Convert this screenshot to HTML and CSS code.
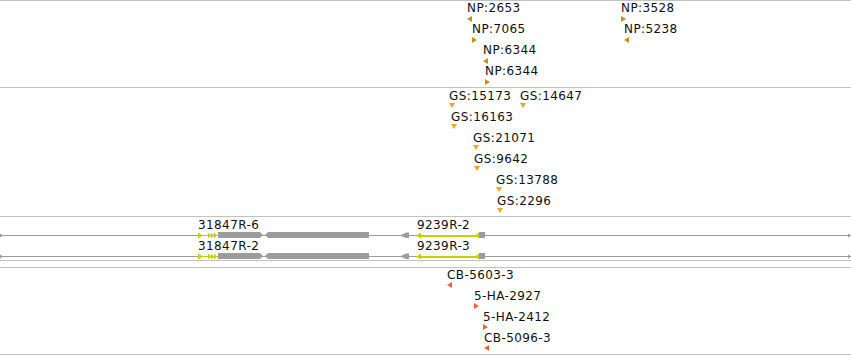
FILE: index.html
```html
<!DOCTYPE html>
<html lang="en">
<head>
  <meta charset="UTF-8" />
  <meta name="viewport" content="width=device-width, initial-scale=1" />
  <title>Track view</title>
  <link rel="stylesheet" href="styles.css">
</head>
<body>

  <div class="tracks">

    <!-- NP features -->
    <div class="track track-np">
      <div class="row">
        <div class="feat np" style="left:467px"><span class="lbl">NP:2653</span><i class="arr left"></i></div>
        <div class="feat np" style="left:621px"><span class="lbl">NP:3528</span><i class="arr right"></i></div>
      </div>
      <div class="row">
        <div class="feat np" style="left:472px"><span class="lbl">NP:7065</span><i class="arr right"></i></div>
        <div class="feat np" style="left:624px"><span class="lbl">NP:5238</span><i class="arr left"></i></div>
      </div>
      <div class="row">
        <div class="feat np" style="left:483px"><span class="lbl">NP:6344</span><i class="arr left"></i></div>
      </div>
      <div class="row">
        <div class="feat np" style="left:485px"><span class="lbl">NP:6344</span><i class="arr right"></i></div>
      </div>
    </div>

    <!-- GS features -->
    <div class="track track-gs">
      <div class="row">
        <div class="feat gs" style="left:449px"><span class="lbl">GS:15173</span><i class="arr down"></i></div>
        <div class="feat gs" style="left:520px"><span class="lbl">GS:14647</span><i class="arr down"></i></div>
      </div>
      <div class="row">
        <div class="feat gs" style="left:451px"><span class="lbl">GS:16163</span><i class="arr down"></i></div>
      </div>
      <div class="row">
        <div class="feat gs" style="left:473px"><span class="lbl">GS:21071</span><i class="arr down"></i></div>
      </div>
      <div class="row">
        <div class="feat gs" style="left:474px"><span class="lbl">GS:9642</span><i class="arr down"></i></div>
      </div>
      <div class="row">
        <div class="feat gs" style="left:496px"><span class="lbl">GS:13788</span><i class="arr down"></i></div>
      </div>
      <div class="row">
        <div class="feat gs" style="left:497px"><span class="lbl">GS:2296</span><i class="arr down"></i></div>
      </div>
    </div>

    <!-- gene models -->
    <div class="track track-genes">
      <div class="row">
        <div class="labels">
          <span class="gene-lbl" style="left:198px">31847R-6</span>
          <span class="gene-lbl" style="left:417px">9239R-2</span>
        </div>
        <svg class="gene" width="851" height="7" viewBox="0 0 851 7">
          <use href="#model" />
        </svg>
      </div>
      <div class="row">
        <div class="labels">
          <span class="gene-lbl" style="left:198px">31847R-2</span>
          <span class="gene-lbl" style="left:417px">9239R-3</span>
        </div>
        <svg class="gene" width="851" height="7" viewBox="0 0 851 7">
          <use href="#model" />
        </svg>
      </div>
    </div>

    <div class="track track-empty"></div>

    <!-- CB / HA features -->
    <div class="track track-cb">
      <div class="row">
        <div class="feat cb" style="left:447px"><span class="lbl">CB-5603-3</span><i class="arr left"></i></div>
      </div>
      <div class="row">
        <div class="feat cb" style="left:474px"><span class="lbl">5-HA-2927</span><i class="arr right"></i></div>
      </div>
      <div class="row">
        <div class="feat cb" style="left:483px"><span class="lbl">5-HA-2412</span><i class="arr right"></i></div>
      </div>
      <div class="row">
        <div class="feat cb" style="left:484px"><span class="lbl">CB-5096-3</span><i class="arr left"></i></div>
      </div>
    </div>

  </div>

  <svg class="defs" width="0" height="0">
    <defs>
      <g id="model">
        <line x1="0" y1="3.5" x2="851" y2="3.5" class="intron" />
        <polygon points="0,1.5 3,3.5 0,5.5" class="cds" />
        <polygon points="848,1.5 851,3.5 848,5.5" class="cds" />

        <!-- first gene -->
        <rect x="198" y="3" width="20" height="1" class="utr" />
        <polygon points="198,0.5 203,3.5 198,6.5" class="utr" />
        <polygon points="208,0.5 211,3.5 208,6.5" class="utr" />
        <polygon points="211,0.5 214,3.5 211,6.5" class="utr" />
        <polygon points="214,0.5 217,3.5 214,6.5" class="utr" />
        <polygon points="218,0 260,0 263,3 260,6 218,6" class="cds" />
        <polygon points="265,3 268,0 369,0 369,6 268,6" class="cds" />

        <!-- second gene -->
        <polygon points="400,3.5 406,0.5 409,0.5 409,6 406,6" class="cds" />
        <rect x="418" y="3" width="59" height="2" class="utr" />
        <polygon points="416,3.5 421,0.5 421,6.5" class="utr" />
        <polygon points="475,3.5 479,0.5 479,6.5" class="utr" />
        <rect x="479" y="0" width="6" height="6" class="cds" />
      </g>
    </defs>
  </svg>

</body>
</html>
```

FILE: styles.css
```css
body {
  margin: 0;
  background-color: #fff;
  font-family: "DejaVu Sans", sans-serif;
  color: #111;
}
.tracks {
  width: 851px;
  height: 356px;
  overflow: hidden;
}
.track {
  border-top: 1px solid #c2c2c2;
}
.track-np {
  padding-bottom: 2px;
}
.track-gs {
  padding: 1px 0;
}
.track-genes {
  padding-top: 1px;
}
.track-empty {
  height: 6px;
}
.track-cb {
  padding-bottom: 2px;
  border-bottom: 1px solid #c2c2c2;
}
.row {
  position: relative;
  height: 21px;
}
.feat {
  position: absolute;
  top: 0;
}
.lbl, .gene-lbl {
  display: block;
  font-size: 12px;
  line-height: 14px;
  letter-spacing: 0.4px;
  white-space: nowrap;
}
.arr {
  display: block;
  width: 0;
  height: 0;
}
.arr.left {
  border-top: 3px solid transparent;
  border-bottom: 3px solid transparent;
  border-right: 5px solid;
}
.arr.right {
  border-top: 3px solid transparent;
  border-bottom: 3px solid transparent;
  border-left: 5px solid;
}
.arr.down {
  border-left: 3px solid transparent;
  border-right: 3px solid transparent;
  border-top: 5px solid;
}
.np .arr {
  margin-top: 1px;
  color: #c98f12;
}
.gs .arr {
  color: #f0a428;
}
.cb .arr {
  color: #f2613e;
}
.labels {
  position: relative;
  height: 14px;
}
.gene-lbl {
  position: absolute;
  top: 0;
}
.gene {
  display: block;
}
.intron {
  stroke: #9c9c9c;
  stroke-width: 1;
}
.cds {
  fill: #9c9c9c;
}
.utr {
  fill: #c4d000;
}
.defs {
  position: absolute;
}
```
